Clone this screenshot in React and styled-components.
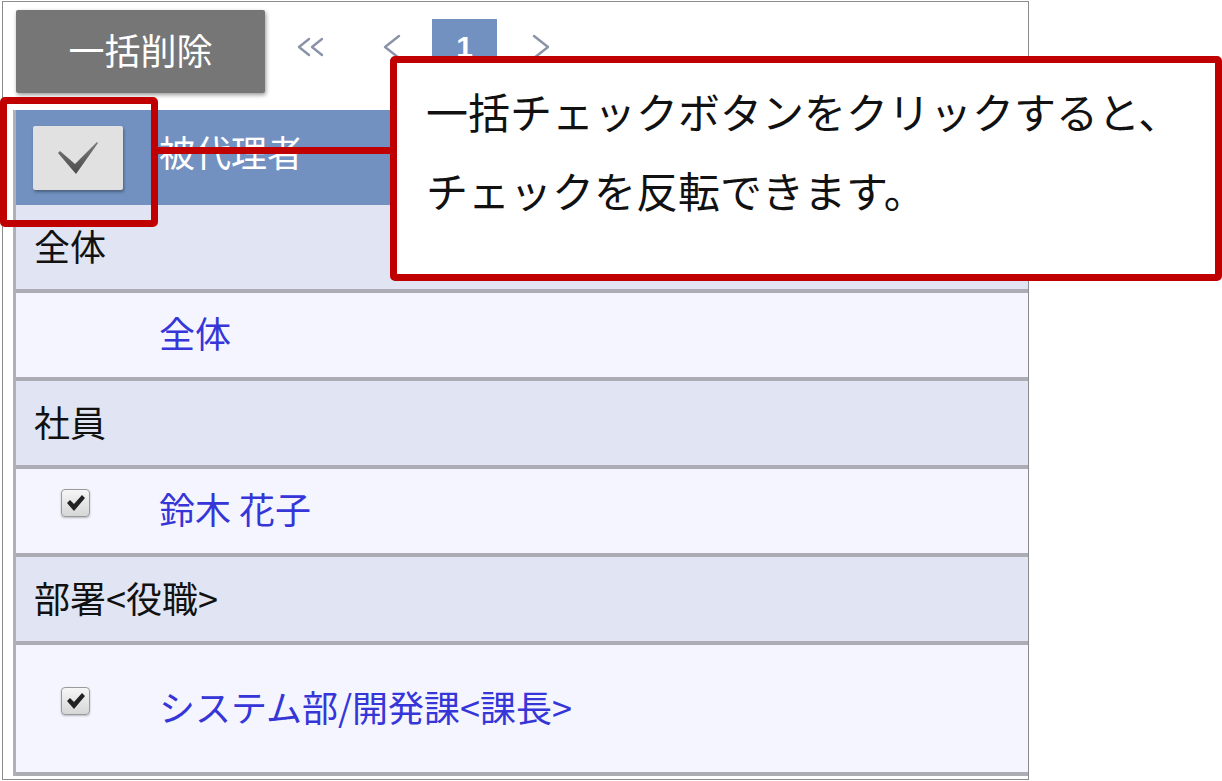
import React from 'react'
import styled, { createGlobalStyle } from 'styled-components'

const GlobalStyle = createGlobalStyle`
  html, body {
    margin: 0;
    padding: 0;
    background: #fff;
  }
  body {
    font-family: "Noto Sans CJK JP", "Noto Sans", sans-serif;
  }
`

const Stage = styled.div`
  position: relative;
  width: 1222px;
  height: 781px;
  overflow: hidden;
`

const Frame = styled.div`
  box-sizing: border-box;
  width: 1027px;
  height: 779px;
  margin: 1px 0 0 2px;
  border: 1px solid #8c8c8c;
  display: flex;
  flex-direction: column;
`

const Toolbar = styled.div`
  box-sizing: border-box;
  height: 108px;
  padding: 8px 0 0 13px;
  display: flex;
  align-items: flex-start;
`

const BulkButton = styled.button`
  width: 249px;
  height: 83px;
  border: none;
  border-radius: 2px;
  background: #767676;
  color: #fff;
  font-family: inherit;
  font-size: 36px;
  box-shadow: 1px 2px 4px rgba(0, 0, 0, 0.4);
  padding: 0 0 6px;
`

const Pager = styled.div`
  display: flex;
  align-items: center;
  height: 56px;
  margin-top: 9px;
`

const PageLink = styled.span`
  display: flex;
  align-items: center;
  justify-content: center;
  margin-left: ${p => p.$ml}px;
  width: ${p => p.$w}px;
  color: #8a93a8;
`

const PageCurrent = styled.span`
  display: flex;
  align-items: center;
  justify-content: center;
  margin-left: ${p => p.$ml}px;
  width: 65px;
  height: 56px;
  background: #7291c1;
  color: #fff;
  font-family: "Liberation Sans", Arial, sans-serif;
  font-weight: bold;
  font-size: 30px;
`

const Table = styled.div`
  margin-left: 10px;
  border-left: 3px solid #b0b0b8;
  display: flex;
  flex-direction: column;
`

const HeaderRow = styled.div`
  height: 95px;
  background: #7291c1;
  display: grid;
  grid-template-columns: 143px 1fr;
  align-items: center;
  color: #fff;
  font-size: 36px;
`

const CheckAllButton = styled.div`
  margin-left: 17px;
  width: 90px;
  height: 64px;
  border-radius: 2px;
  background: #e1e1e1;
  box-shadow: 1px 2px 3px rgba(0, 0, 0, 0.35);
  display: flex;
  align-items: center;
  justify-content: center;
`

const HeaderLabel = styled.span`
  padding-bottom: 14px;
`

const GroupRow = styled.div`
  box-sizing: border-box;
  height: 88px;
  background: #e1e5f3;
  border-bottom: 4px solid #acacb4;
  display: flex;
  align-items: center;
  padding: 0 0 4px 18px;
  font-size: 36px;
  color: #111;
`

const ItemRow = styled.div`
  box-sizing: border-box;
  height: ${p => p.$h}px;
  background: #f4f5fe;
  border-bottom: 4px solid #acacb4;
  display: grid;
  grid-template-columns: 143px 1fr;
  align-items: center;
  padding-bottom: 6px;
  font-size: 36px;
`

const CheckCell = styled.div`
  padding-left: 45px;
  min-height: 1px;
  display: flex;
  align-items: center;
`

const Checkbox = styled.span`
  box-sizing: border-box;
  width: 29px;
  height: 28px;
  margin-bottom: 10px;
  border: 1px solid #9a9a9a;
  border-radius: 4px;
  background: linear-gradient(#f6f6f6, #d6d6d6);
  box-shadow: 0 1px 2px rgba(0, 0, 0, 0.25);
  display: flex;
  align-items: center;
  justify-content: center;
`

const ItemLink = styled.a`
  color: #3636d8;
  text-decoration: none;
`

const Highlight = styled.div`
  position: absolute;
  left: 0;
  top: 97px;
  width: 158px;
  height: 130px;
  box-sizing: border-box;
  border: 7px solid #c00000;
  border-radius: 5px;
`

const Connector = styled.div`
  position: absolute;
  left: 158px;
  top: 147px;
  width: 240px;
  height: 7px;
  background: #c00000;
`

const Callout = styled.div`
  position: absolute;
  left: 390px;
  top: 56px;
  width: 832px;
  height: 225px;
  box-sizing: border-box;
  border: 7px solid #c00000;
  border-radius: 5px;
  background: #fff;
  padding: 8px 0 0 29px;
  font-size: 42px;
  line-height: 79px;
  color: #111;
  white-space: nowrap;
`

const DoubleChevron = () => (
  <svg width="30" height="20" viewBox="0 0 30 20" fill="none" stroke="currentColor" strokeWidth="2.4" strokeLinecap="round" strokeLinejoin="round">
    <polyline points="13,2 3,10 13,18" />
    <polyline points="26,2 16,10 26,18" />
  </svg>
)

const Chevron = ({ dir }) => (
  <svg width="20" height="26" viewBox="0 0 20 26" fill="none" stroke="currentColor" strokeWidth="2.4" strokeLinecap="round" strokeLinejoin="round">
    {dir === 'left' ? <polyline points="17,2 3,13 17,24" /> : <polyline points="3,2 17,13 3,24" />}
  </svg>
)

const BigCheck = () => (
  <svg width="42" height="34" viewBox="0 0 42 34">
    <defs>
      <linearGradient id="ck" x1="0" y1="0" x2="0" y2="1">
        <stop offset="0" stopColor="#7a7a7a" />
        <stop offset="1" stopColor="#4a4a4a" />
      </linearGradient>
    </defs>
    <polygon points="1,12 3,10 18,23 40,1 41,2 19,33" fill="url(#ck)" />
  </svg>
)

const SmallCheck = () => (
  <svg width="20" height="18" viewBox="0 0 20 18">
    <polygon points="1,9 4,6 8,10 16,1 19,4 8,17" fill="#222" />
  </svg>
)

const rows = [
  { group: '全体', items: [{ name: '全体', checkable: false, h: 88 }] },
  { group: '社員', items: [{ name: '鈴木 花子', checkable: true, h: 88 }] },
  { group: '部署<役職>', items: [{ name: 'システム部/開発課<課長>', checkable: true, h: 131 }] },
]

export default function App() {
  return (
    <>
      <GlobalStyle />
      <Stage>
        <Frame>
          <Toolbar>
            <BulkButton>一括削除</BulkButton>
            <Pager>
              <PageLink $ml={31} $w={30}><DoubleChevron /></PageLink>
              <PageLink $ml={56} $w={20}><Chevron dir="left" /></PageLink>
              <PageCurrent $ml={30}>1</PageCurrent>
              <PageLink $ml={34} $w={20}><Chevron dir="right" /></PageLink>
            </Pager>
          </Toolbar>
          <Table>
            <HeaderRow>
              <CheckAllButton><BigCheck /></CheckAllButton>
              <HeaderLabel>被代理者</HeaderLabel>
            </HeaderRow>
            {rows.map(r => (
              <React.Fragment key={r.group}>
                <GroupRow>{r.group}</GroupRow>
                {r.items.map(it => (
                  <ItemRow key={it.name} $h={it.h}>
                    <CheckCell>
                      {it.checkable && <Checkbox><SmallCheck /></Checkbox>}
                    </CheckCell>
                    <ItemLink href="#">{it.name}</ItemLink>
                  </ItemRow>
                ))}
              </React.Fragment>
            ))}
          </Table>
        </Frame>
        <Highlight />
        <Connector />
        <Callout>
          一括チェックボタンをクリックすると、<br />
          チェックを反転できます。
        </Callout>
      </Stage>
    </>
  )
}
